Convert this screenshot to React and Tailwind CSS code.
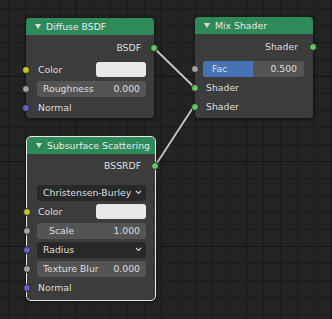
import React from 'react';

const font = { fontFamily: '"DejaVu Sans", sans-serif' };

const socketColors = {
  yellow: 'bg-[#c7c729]',
  gray: 'bg-[#a1a1a1]',
  purple: 'bg-[#6363c7]',
  green: 'bg-[#63c763]',
};

function Socket({ color, side }) {
  return (
    <span
      className={`absolute z-10 top-1/2 -translate-y-1/2 w-[8px] h-[8px] rounded-full border border-[#262626] ${socketColors[color]} ${
        side === 'left' ? 'left-[-4px]' : 'right-[-4px]'
      }`}
    />
  );
}

function Grid() {
  const lines = [];
  for (let k = 0; k < 20; k++) {
    const p = 8 + 17 * k;
    const major = (p - 76) % 85 === 0;
    const c = major ? '#141414' : '#1b1b1b';
    lines.push(<line key={'v' + k} x1={p + 0.5} y1={0} x2={p + 0.5} y2={319} stroke={c} strokeWidth="1" />);
    lines.push(<line key={'h' + k} x1={0} y1={p + 0.5} x2={332} y2={p + 0.5} stroke={c} strokeWidth="1" />);
  }
  return (
    <svg className="absolute inset-0" width="332" height="319">
      {lines}
    </svg>
  );
}

function Header({ title }) {
  return (
    <div className="h-[17px] bg-[#2f8a5a] rounded-t-[4px] flex items-center pl-[9px] gap-[5px] text-[#e8e8e8]">
      <svg width="6" height="5" viewBox="0 0 6 5">
        <polygon points="0,0 6,0 3,5" fill="#dcdcdc" />
      </svg>
      <span className="leading-none whitespace-nowrap">{title}</span>
    </div>
  );
}

function Field({ label, value, className = '' }) {
  return (
    <div className={`h-[16px] rounded-[3px] bg-[#545454] flex items-center justify-between px-[6px] ${className}`}>
      <span>{label}</span>
      <span>{value}</span>
    </div>
  );
}

function Dropdown({ label }) {
  return (
    <div className="h-[16px] rounded-[3px] bg-[#282828] flex items-center justify-between pl-[6px] pr-[4px]">
      <span className="whitespace-nowrap">{label}</span>
      <svg width="7" height="5" viewBox="0 0 7 5">
        <polyline points="1,1 3.5,3.5 6,1" fill="none" stroke="#d0d0d0" strokeWidth="1.2" />
      </svg>
    </div>
  );
}

export default function App() {
  return (
    <div
      className="relative w-[332px] h-[319px] overflow-hidden bg-[#232323] text-[9.3px] text-[#dedede]"
      style={font}
    >
      <Grid />
      <svg className="absolute inset-0" width="332" height="319">
        <line x1="154" y1="48" x2="194" y2="87" stroke="#c8c8c8" strokeWidth="1.8" />
        <line x1="155" y1="166" x2="194" y2="106" stroke="#c8c8c8" strokeWidth="1.8" />
      </svg>

      {/* Diffuse BSDF */}
      <div className="absolute left-[26px] top-[18px] w-[128px] h-[100px] rounded-[4px] bg-[#3c3c3c] shadow-[0_1px_4px_rgba(0,0,0,0.6)]">
        <Header title="Diffuse BSDF" />
        <div className="pt-[4px] flex flex-col">
          <div className="relative h-[18px] flex items-center justify-end pr-[13px]">
            BSDF
            <Socket color="green" side="right" />
          </div>
          <div className="relative h-[19px] mt-[3px] flex items-center justify-between pl-[12px] pr-[8px]">
            <span>Color</span>
            <div className="w-[50px] h-[15px] rounded-[3px] bg-[#e8e8e8]" />
            <Socket color="yellow" side="left" />
          </div>
          <div className="relative h-[19px] flex flex-col justify-center pl-[11px] pr-[8px]">
            <Field label="Roughness" value="0.000" />
            <Socket color="gray" side="left" />
          </div>
          <div className="relative h-[19px] flex items-center pl-[12px]">
            Normal
            <Socket color="purple" side="left" />
          </div>
        </div>
      </div>

      {/* Mix Shader */}
      <div className="absolute left-[195px] top-[17px] w-[118px] h-[101px] rounded-[4px] bg-[#3c3c3c] shadow-[0_1px_4px_rgba(0,0,0,0.6)]">
        <Header title="Mix Shader" />
        <div className="pt-[4px] flex flex-col">
          <div className="relative h-[18px] flex items-center justify-end pr-[15px]">
            Shader
            <Socket color="green" side="right" />
          </div>
          <div className="relative h-[19px] mt-[3px] flex flex-col justify-center pl-[8px] pr-[9px]">
            <div className="h-[16px] rounded-[3px] bg-[#545454] flex items-center overflow-hidden relative">
              <div className="w-[50px] h-full bg-[#4772b3]" />
              <span className="absolute left-[9px]">Fac</span>
              <span className="absolute right-[7px]">0.500</span>
            </div>
            <Socket color="gray" side="left" />
          </div>
          <div className="relative h-[19px] flex items-center pl-[11px]">
            Shader
            <Socket color="green" side="left" />
          </div>
          <div className="relative h-[19px] flex items-center pl-[11px]">
            Shader
            <Socket color="green" side="left" />
          </div>
        </div>
      </div>

      {/* Subsurface Scattering */}
      <div className="absolute left-[27px] top-[137px] w-[128px] h-[163px] rounded-[4px] bg-[#3c3c3c] outline outline-1 outline-[#e8e8e8] shadow-[0_1px_4px_rgba(0,0,0,0.6)]">
        <Header title="Subsurface Scattering" />
        <div className="pt-[3px] flex flex-col">
          <div className="relative h-[18px] flex items-center justify-end pr-[14px]">
            BSSRDF
            <Socket color="green" side="right" />
          </div>
          <div className="h-[19px] mt-[8px] flex flex-col justify-center pl-[10px] pr-[9px]">
            <Dropdown label="Christensen-Burley" />
          </div>
          <div className="relative h-[19px] flex items-center justify-between pl-[11px] pr-[9px]">
            <span>Color</span>
            <div className="w-[50px] h-[15px] rounded-[3px] bg-[#e8e8e8]" />
            <Socket color="yellow" side="left" />
          </div>
          <div className="relative h-[19px] flex flex-col justify-center pl-[10px] pr-[9px]">
            <Field label="Scale" value="1.000" className="pl-[12px]" />
            <Socket color="gray" side="left" />
          </div>
          <div className="relative h-[19px] flex flex-col justify-center pl-[10px] pr-[9px]">
            <Dropdown label="Radius" />
            <Socket color="purple" side="left" />
          </div>
          <div className="relative h-[19px] flex flex-col justify-center pl-[10px] pr-[9px]">
            <Field label="Texture Blur" value="0.000" />
            <Socket color="gray" side="left" />
          </div>
          <div className="relative h-[19px] flex items-center pl-[11px]">
            Normal
            <Socket color="purple" side="left" />
          </div>
        </div>
      </div>
    </div>
  );
}
